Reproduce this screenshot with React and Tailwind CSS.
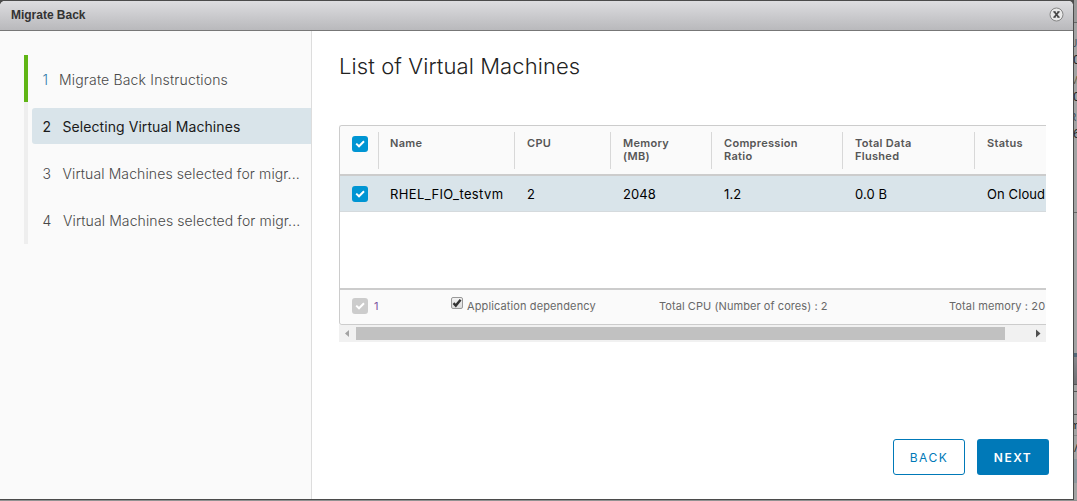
import React from 'react';

const steps = [
  { label: 'Migrate Back Instructions', item: 'font-light text-[#484848] tracking-[0.17px]', num: 'w-[16.5px] text-[#2f7aa8]' },
  { label: 'Selecting Virtual Machines', item: 'bg-[#d9e4ea] text-[#1a1a1a] tracking-[0.07px]', num: 'w-5' },
  { label: 'Virtual Machines selected for migr...', item: 'font-light text-[#484848] tracking-[0.11px]', num: 'w-5' },
  { label: 'Virtual Machines selected for migr...', item: 'font-light text-[#484848] tracking-[0.11px]', num: 'w-[20.5px]' },
];

const columns = [
  { title: ['Name'], value: 'RHEL_FIO_testvm', width: 'w-[136px]', head: 'pl-[11px]', cell: 'pl-3' },
  { title: ['CPU'], value: '2', width: 'w-[96px]', head: 'pl-3', cell: 'pl-[13px]' },
  { title: ['Memory', '(MB)'], value: '2048', width: 'w-[101px]', head: 'pl-3', cell: 'pl-[13px]' },
  { title: ['Compression', 'Ratio'], value: '1.2', width: 'w-[131px]', head: 'pl-3', cell: 'pl-[13px]' },
  { title: ['Total Data', 'Flushed'], value: '0.0 B', width: 'w-[132px]', head: 'pl-3', cell: 'pl-[13px]' },
  { title: ['Status'], value: 'On Cloud', width: 'w-[72px]', head: 'pl-3', cell: 'pl-[13px]' },
];

function Check({ color }) {
  return (
    <span className={`flex size-4 shrink-0 items-center justify-center rounded-[3px] ${color}`}>
      <svg className="size-4" viewBox="0 0 16 16" fill="none">
        <path d="M4.2 7.6 7 10.3 12 5.2" stroke="#fff" strokeWidth="2" />
      </svg>
    </span>
  );
}

function NativeCheck() {
  return (
    <span className="mt-[7px] flex size-3 shrink-0 items-center justify-center rounded-[2px] border border-[#999] bg-linear-to-b from-[#f2f2f2] to-[#dcdcdc]">
      <svg className="size-[10px] shrink-0" viewBox="0 0 10 10" fill="none">
        <path d="M1.5 5.2 3.8 7.6 8.6 1.8" stroke="#333" strokeWidth="2.4" />
      </svg>
    </span>
  );
}

function TitleBar() {
  return (
    <header className="flex h-[30px] items-center justify-between rounded-t-[5px] border-b border-[#777] bg-linear-to-b from-[#dddde0] to-[#b9b9bc] pr-[9px] pl-[11px]">
      <h1 className="-mt-[2px] font-['Liberation_Sans',Arial,sans-serif] text-xs leading-4 font-bold tracking-[-0.02px] text-[#333]">Migrate Back</h1>
      <svg className="-mt-[2px] size-[15px]" viewBox="0 0 15 15" fill="none">
        <circle cx="7.5" cy="7.5" r="6.5" fill="#e9e9e9" stroke="#858585" />
        <path d="m5.3 4.8 4.4 5.4M9.7 4.8 5.3 10.2" stroke="#484848" strokeWidth="1.8" />
        <path d="M4.2 4.8h2.4M8.4 4.8h2.4M4.2 10.2h2.4M8.4 10.2h2.4" stroke="#484848" />
      </svg>
    </header>
  );
}

function Sidebar() {
  return (
    <nav className="w-[312px] shrink-0 border-r border-[#ddd] bg-[#fafafa] pt-6 pl-6">
      {steps.map((step, i) => (
        <div key={i} className="flex h-[47px]">
          <div className={`w-1 shrink-0 ${i === 0 ? 'bg-[#60b515]' : 'bg-[#eee]'}`} />
          <div className={`mt-[6px] ml-1 flex h-9 min-w-0 flex-1 items-center rounded-l-[3px] pt-[2px] pl-[10.5px] text-sm whitespace-nowrap ${step.item}`}>
            <span className={`shrink-0 ${step.num}`}>{i + 1}</span>
            <span>{step.label}</span>
          </div>
        </div>
      ))}
      <div className="h-px w-1 bg-[#eee]" />
    </nav>
  );
}

function DataGrid() {
  return (
    <section className="w-[707px] overflow-hidden">
      <div className="overflow-hidden rounded-l-[3px] border border-r-0 border-[#ccc]">
        <div className="flex h-[50px] border-b-2 border-[#ccc] bg-[#fafafa]">
          <div className="w-[38px] shrink-0 pt-[10px] pl-3"><Check color="bg-[#0095d3]" /></div>
          {columns.map((c) => (
            <div key={c.title[0]} className={`mt-[6px] h-[37px] shrink-0 border-l border-[#d8d8d8] pt-[5px] text-[11px] leading-[13px] font-semibold tracking-[0.3px] text-[#565656] ${c.width} ${c.head}`}>
              {c.title.map((t) => <div key={t}>{t}</div>)}
            </div>
          ))}
        </div>
        <div className="flex h-9 items-center border-b border-[#d5dadd] bg-[#d9e4ea]">
          <div className="w-[38px] shrink-0 pl-3"><Check color="bg-[#0095d3]" /></div>
          {columns.map((c, i) => (
            <div key={c.title[0]} className={`shrink-0 pt-[2px] text-[13px] whitespace-nowrap text-black ${i === 0 ? 'tracking-[0.37px]' : 'tracking-[0.1px]'} ${c.width} ${c.cell}`}>{c.value}</div>
          ))}
        </div>
        <div className="h-[76px] bg-white" />
        <footer className="flex h-[36px] border-t-2 border-[#ccc] bg-[#fafafa] text-[11px] leading-8 tracking-[0.07px] whitespace-nowrap text-[#686868]">
          <div className="flex w-[111px] shrink-0 items-start gap-[6px] pl-3">
            <span className="mt-2"><Check color="bg-[#ccc]" /></span>
            <span className="text-[#7a55a0]">1</span>
          </div>
          <div className="flex w-[208px] shrink-0 items-start gap-1"><NativeCheck /><span className="tracking-[0.12px]">Application dependency</span></div>
          <div className="w-[290px] shrink-0">Total CPU (Number of cores) : 2</div>
          <div className="tracking-[0.12px]">Total memory : 20</div>
        </footer>
      </div>
      <div className="flex h-[17px] items-center justify-between bg-[#f1f1f1]">
        <svg className="h-[17px] w-[17px]" viewBox="0 0 17 17"><path d="M10 5v7L6 8.5z" fill="#a3a3a3" /></svg>
        <div className="mr-auto h-[13px] w-[649px] bg-[#c1c1c1]" />
        <svg className="h-[17px] w-[17px]" viewBox="0 0 17 17"><path d="M7 4.5v8l4.5-4z" fill="#505050" /></svg>
      </div>
    </section>
  );
}

function Backdrop() {
  return (
    <div className="flex w-[3px] shrink-0 flex-col overflow-hidden bg-[#a3a3a3] font-['Open_Sans',sans-serif] text-[13px] leading-4 text-[#222]">
      <div className="h-[23px] shrink-0 border-b border-[#666] bg-[#999]" />
      <div className="h-[190px] shrink-0 border-b border-[#666] pt-[12px]">
        <div className="-ml-1 h-4 text-[10px] text-[#345]">U</div>
        <div className="-ml-px h-[21px]">0</div>
        <div className="-ml-1 h-4 text-[10px] text-[#653]">M</div>
        <div className="-ml-px h-[21px]">0</div>
        <div className="-ml-1 h-4 text-[10px] text-[#345]">R</div>
        <div className="-ml-px">6</div>
      </div>
      <div className="h-[140px] shrink-0" />
      <div className="h-1 shrink-0 bg-[#536878]" />
      <div className="h-7 shrink-0 border-b border-[#555] bg-linear-to-b from-[#88888c] to-[#707074]" />
      <div className="mt-[6px] h-[24px] shrink-0 border-y border-[#555]" />
      <div className="-ml-1 h-5 shrink-0 text-[11px] leading-5">m</div>
      <div className="h-6 shrink-0 border-t border-[#888] text-[11px] leading-6">/</div>
      <div className="h-6 shrink-0 bg-[#8d989f]" />
    </div>
  );
}

export default function App() {
  return (
    <div className="flex h-[501px] w-[1077px] flex-col overflow-hidden bg-[#929292] font-[Inter,'Liberation_Sans',sans-serif]">
      <div className="flex h-[500px] bg-[#4b4b4b]">
        <main className="mt-px flex h-[498px] w-[1074px] shrink-0 flex-col rounded-t-[5px] border-r border-[#4b4b4b] bg-white">
          <TitleBar />
          <div className="flex min-h-0 flex-1">
            <Sidebar />
            <div className="flex w-[737px] flex-col pt-5 pl-[27px]">
              <h2 className="-mt-px mb-px h-[74px] text-[22px] leading-8 font-light tracking-[0.1px] text-[#222]">List of Virtual Machines</h2>
              <DataGrid />
              <div className="mt-auto mb-6 flex justify-end gap-3 text-xs tracking-[1.5px]">
                <button className="h-9 w-[72px] rounded-[3px] border border-[#0079b8] pt-px text-[#0079b8]">BACK</button>
                <button className="h-9 w-[72px] rounded-[3px] bg-[#0079b8] pt-px font-semibold text-white">NEXT</button>
              </div>
            </div>
          </div>
        </main>
        <Backdrop />
      </div>
    </div>
  );
}
